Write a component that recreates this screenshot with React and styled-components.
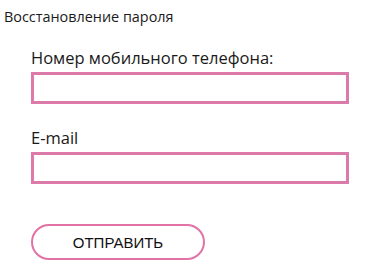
import React from 'react';
import styled, { createGlobalStyle } from 'styled-components';

const GlobalStyle = createGlobalStyle`
  html, body {
    margin: 0;
    padding: 0;
    background: #fff;
  }
  body {
    font-family: 'Open Sans', 'Noto Sans', sans-serif;
    color: #1a1a1a;
  }
`;

const Wrapper = styled.div`
  padding: 7px 0 0 4px;
  width: 379px;
  box-sizing: border-box;
`;

const Title = styled.h3`
  margin: 0;
  font-size: 14.4px;
  font-weight: 400;
  line-height: 20px;
`;

const Form = styled.form`
  display: flex;
  flex-direction: column;
  padding: 21px 0 0 27px;
`;

const Field = styled.div`
  display: flex;
  flex-direction: column;
  margin-bottom: ${p => p.gap}px;
`;

const Label = styled.label`
  font-size: 16.5px;
  line-height: 20px;
  margin-bottom: 4px;
`;

const Input = styled.input`
  width: 318px;
  height: 32px;
  box-sizing: border-box;
  border: 3px solid #dc7aaa;
  outline: none;
  background: #fff;
  padding: 0 6px;
  font-size: 14px;
`;

const Submit = styled.button`
  width: 174px;
  height: 36px;
  box-sizing: border-box;
  border: 2px solid #e272a5;
  border-radius: 18px;
  background: #fff;
  font-family: 'Liberation Sans', Arial, sans-serif;
  font-size: 15px;
  color: #111;
  cursor: pointer;
  padding: 0;
`;

const App = () => (
  <>
    <GlobalStyle />
    <Wrapper>
      <Title>Восстановление пароля</Title>
      <Form onSubmit={e => e.preventDefault()}>
        <Field gap={24}>
          <Label>Номер мобильного телефона:</Label>
          <Input type="tel" />
        </Field>
        <Field gap={40}>
          <Label>E-mail</Label>
          <Input type="email" />
        </Field>
        <Submit type="submit">ОТПРАВИТЬ</Submit>
      </Form>
    </Wrapper>
  </>
);

export default App;
